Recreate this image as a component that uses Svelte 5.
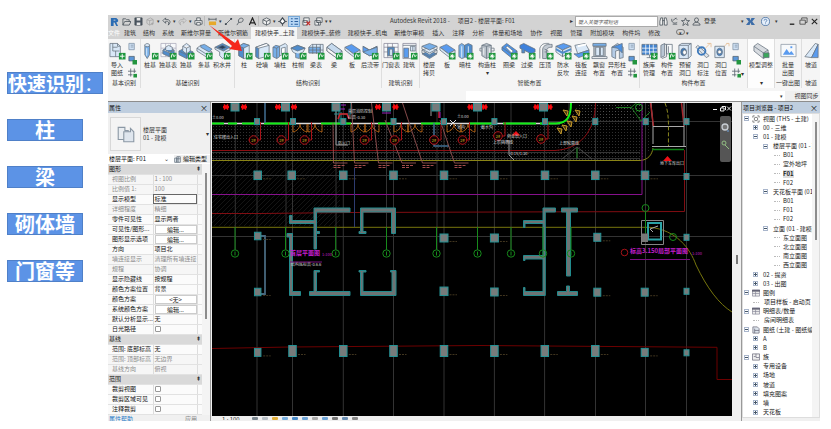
<script>
  const labels = ['柱', '梁', '砌体墙', '门窗等'];

  const quick = ['logo', 'open', 'save', 'sync', 'v', 'undo', 'v', 'redo', 'v', 'print', '|', 'dim', 'v', 'line', 'tag', 'text', '|', 'cube', 'v', 'section', 'thin', 'close', 'windows', 'v', 'v'];
  const tools = {
    logo: [['M1 1H7L9 3V5L7 6L9 10H7L5 6H4V10H1Z', '#2b6cb3', 'none'], ['M4 3H6V4H4Z', '#d3d3d3', 'none']],
    open: [['M1 9V2H4L5 3H8V5M1 9L3 5H10L8 9Z', 'none']],
    save: [['M1 1H9V9H1Z', '#4b5560'], ['M3 1H7V4H3ZM3 6H7V9H3Z', '#e8e8e8', 'none']],
    sync: [['M1 3L5 1L8 3V7L4 9L1 7ZM1 3L4 4V9M4 4L8 3M7 6V9M5.500 7.500H8.500', 'none', '#a2a2a2']],
    undo: [['M4 1L1 4L4 7V5C7 4 8 6 7 9C11 5 8 2 4 3Z', 'none']],
    redo: [['M6 1L9 4L6 7V5C3 4 2 6 3 9C-1 5 2 2 6 3Z', 'none', '#a8a8a8']],
    print: [['M3 4V1H7V4M3 8H1V4H9V8H7M3 6H7V9H3Z', '#eee']],
    dim: [['M1 1V4M9 1V4M1 2.500H9', 'none'], ['M1 5H9V9H1Z', '#e7a92b', 'none']],
    line: [['M2 8L8 2', 'none'], ['M1 7H3V9H1ZM7 1H9V3H7Z', '#3d4750', 'none']],
    tag: [['M1 9L3 6M3 6C1 1 8 0 8 3C8 6 5 6 3 6', 'none']],
    text: [['M1.500 9L5 1L8.500 9M3 6.500H7', 'none', '#222', 1.3]],
    cube: [['M1 3L5 1L9 3V7L5 9L1 7ZM1 3L5 5L9 3M5 5V9', '#eee']],
    section: [['M0 5H2M8 5H10M5 8V10', 'none'], ['M5 1L8 5L5 8L2 5Z', '#fff', '#3d4750', 1.3]],
    thin: [['M1 2H3M5 2H9M1 5H3M5 5H9M1 8H3M5 8H9', 'none', '#2a5f9e', 1.2]],
    close: [['M2 1H8V6H2ZM1 4H6V9H1Z', '#eee'], ['M5 5L9 9M9 5L5 9', 'none', '#c9302c', 1.3]],
    windows: [['M3 1H9V6H3ZM1 4H7V9H1Z', '#eee'], ['M3 6H5V9', 'none']],
    find: [['M1 9V5L2 1H4V9ZM6 9V1H8L9 5V9ZM4 4H6', '#eee']],
    sat: [['M2 2C1 6 5 8 8 6M3 8H8M3 4L7 1M6 1L8 3', 'none']],
    star: [['M5 1L6.200 4H9.500L7 6L8 9.500L5 7.500L2 9.500L3 6L.5 4H3.800Z', 'none']],
    user: [['M5 1A2.200 2.200 0 1 1 5 5.500A2.200 2.200 0 1 1 5 1M1 9C1 5 9 5 9 9Z', 'none']],
    exch: [['M0 1H4L5 4L6 1H10L7 5L10 9H6L5 6L4 9H0L3 5Z', '#3d6da8', 'none']],
    help: [['M5 .5A4.500 4.500 0 1 1 5 9.500A4.500 4.500 0 1 1 5 .5', '#e4eefa', '#35659e'], ['M3.500 4C3.500 2 6.500 2 6.500 4C6.500 5 5 5 5 6.200M5 7.200V8', 'none', '#35659e']],
    min: [['M2 8H7', 'none', '#222', 1.5]],
    max: [['M3 3V1H9V6H7M1 3.500H7V8H1Z', 'none', '#333']],
    x: [['M2 2L8 8M8 2L2 8', 'none', '#222', 1.2]]
  };

  const tabs1 = ['建筑', '结构', '系统', '斯维尔算量', '斯维尔钢筋', '建模快手_土建', '建模快手_装修', '建模快手_机电', '斯维尔审模'];
  const tabs2 = ['插入', '注释', '分析', '体量和场地', '协作', '视图', '管理', '附加模块', '构件坞', '修改'];

  const B = '#76aee8', L = '#d9e8f7', D = '#4f8ccc', W = '#f7f9fb';
  const art = {
    import: [['M1 1H9L12 4V15H1Z', L], ['M9 1V4H12M4 1V9H11M4 5H9M7 9V15', 'none']],
    pile: [['M3 3V13L5.500 17L8 13V3Z', B], ['M3 3C3 .5 8 .5 8 3C8 5 3 5 3 3', L], ['M5 6V14', 'none', '#fff']],
    footTable: [['M1 1H17V15H1ZM6 1V15M11 1V15M1 6H17M1 11H17', W, '#aab'], ['M3 8L8 5L15 8V12L10 15L3 12Z', D], ['M6 5L9 3L13 5V9L10 10L6 8ZM3 8L10 11L15 8M10 11V15', L]],
    foot: [['M1 9L7 6L16 10V13L9 17L1 13Z', D], ['M5 4L9 1L13 4V9L9 12L5 9ZM5 4L9 6L13 4M9 6V12', L], ['M1 9L9 13L16 10M9 13V17', 'none']],
    strip: [['M1 6L5 3L17 10V13L12 16L1 9Z', L], ['M5 3L9 2L17 7L14 10L5 5Z', B], ['M1 6L12 13L17 10M12 13V16', 'none']],
    well: [['M1 5L9 1L17 5L10 9Z', D], ['M4 5L9 3L13 5L9 7Z', '#273f5b'], ['M1 5L10 9L17 5V8L12 10V15L9 17L6 14V10L1 7Z', L]],
    col: [['M3 4L8 1L14 3V15L9 17L3 14Z', L], ['M3 4L8 6L14 3L8 1ZM8 6V17', B], ['M3 4L8 6V17L3 14Z', D]],
    wall: [['M2 5L13 1L16 3V14L5 17L2 15Z', L], ['M2 5L5 6V17L2 15Z', D], ['M2 5L13 1L16 3L5 6Z', '#fff']],
    wallcol: [['M1 5L4 3L8 4V15L5 17L1 15Z', B], ['M8 4L14 1L16 3V11L8 14Z', L], ['M1 5L5 6L8 4M5 6V17', 'none'], ['M10 6L14 5V11L10 12Z', '#fff']],
    cap: [['M1 6L8 3L16 6L14 10L8 13L3 10Z', L], ['M1 6L8 3L16 6L8 9Z', D], ['M6 11V16L10 17V12', B]],
    beamTable: [['M1 5L4 2H16V11H1Z', L], ['M1 5H13V11H1Z', B], ['M1 8H16M5 2V12M9 2V12M13 2V12', 'none']],
    beam: [['M1 5L6 1L17 9V14L12 17L1 9Z', L], ['M1 5L12 13V17L1 9Z', '#f5f5f5'], ['M1 5L6 1L17 9L12 13Z', '#c6daee']],
    slab: [['M1 5L8 2L17 8L10 12Z', '#5a9bef'], ['M1 5V8L10 15L17 11V8L10 12Z', L]],
    post: [['M1 4L8 8L16 4V12L8 14L1 10Z', '#5a9bef'], ['M1 4L8 8L16 4', 'none'], ['M1 10L16 5V12L8 14Z', B]],
    doorTable: [['M1 1H16V16H1ZM1 5H16M5 1V16M10 1V16M1 10H16', W, '#889'], ['M5 5H12V14H5Z', D], ['M7 7H10V14H7Z', L]],
    door: [['M2 1H16V17H2Z', W, '#889'], ['M3 6H8V16H3Z', '#5a9bef'], ['M10 4H15V9H10ZM12.500 4V9', L], ['M2 3H16', 'none']],
    copy: [['M1 12L9 9L17 12L9 17Z', D], ['M1 8L9 5L17 8L9 13Z', L], ['M1 4L9 1L17 4L9 8Z', B], ['M1 4V7L9 11L17 7V4M1 8V11L9 15L17 11V8', 'none']],
    dark: [['M2 3L5 1L8 3V16L5 17L2 15Z', B], ['M8 3L12 1L16 3V15L12 17L8 15Z', D], ['M12 4V17M5 4V16', 'none', '#fff']],
    cons: [['M3 3L8 1L13 3V14L8 17L3 14Z', '#b9c1c9'], ['M3 6H1V9H3M13 6H16V9H13M8 4V17M3 3L8 4L13 3', 'none'], ['M5 6V13M11 6V13', 'none', '#fff']],
    ring: [['M1 5L6 1L17 9V13L12 17L1 8Z', '#4b91e5'], ['M5 5L7 4L13 9L11 11Z', '#fff'], ['M1 5L12 13L17 9', 'none']],
    lintel: [['M1 3L5 1L17 7V10L13 12L1 6Z', '#3f82dc'], ['M3 7V11H6V8M11 11V16L14 15', D]],
    cope: [['M6 17V7C7 2 11 2 16 2V5C12 5 10 6 10 10V17Z', '#c3cad2'], ['M3 17V6C5 0 10 1 13 1M8 7L12 9M8 10H12', 'none']],
    water: [['M1 4L9 1L17 4L8 8Z', '#5a9bef'], ['M1 4L8 8V15L1 10ZM8 8L17 4V10L8 15Z', L], ['M1 7L8 11L17 7', 'none', D, 2]],
    raft: [['M2 3L13 1L17 8L5 12Z', L], ['M5 4L14 2', 'none', '#fff', 2], ['M5 12L17 8V12L6 16L1 12Z', '#5a9bef']],
    bay: [['M2 1H16V4H2Z', B], ['M3 4H15V15H3Z', '#b8bec5'], ['M5 5H9V14H5ZM10 5H13V14H10Z', L], ['M1 15H17V17H1Z', W]],
    odd: [['M3 5L9 1L15 5V16L11 17V8L7 9V17L3 15Z', '#b5cce6'], ['M3 5L14 1V11L9 6Z', '#4b91e5']],
    lib: [['M1 2H17V13H1Z', '#4384cf'], ['M1 6H17M1 10H17M5 2V13M9 2V13M13 2V13', 'none', '#fff'], ['M6 16H12M9 13V16', 'none']],
    parts: [['M2 3L6 1V14L2 16Z', '#b9c6d4'], ['M8 2H14V12H8Z', W], ['M6 2H8V15L3 17M10 4V11', 'none']],
    hole: [['M2 3L5 1H15V14L12 17H2Z', L], ['M2 3H12V17M12 3L15 1', 'none'], ['M7 6A3 4 0 1 1 7 14A3 4 0 1 1 7 6', '#3d79bb'], ['M8 8A2 2.500 0 1 1 8 13A2 2.500 0 1 1 8 8', '#fff']],
    mark: [['M1 5L3 3L15 14L12 16Z', '#dce3ea'], ['M7 5A4 4 0 1 1 7 13A4 4 0 1 1 7 5', 'none', '#3d79bb', 2], ['M11 6L16 1M13 1H17V5', 'none', '#e4b88c']],
    place: [['M2 4H12V16H2Z', L], ['M7 6A3 4 0 1 1 7 14A3 4 0 1 1 7 6', '#4384cf'], ['M7 8A2 2 0 1 1 7 12A2 2 0 1 1 7 8', '#fff'], ['M12 4L15 1M14 1H17V4', 'none', '#e4b88c']],
    adjust: [['M1 4L5 1L16 8V14L11 17L1 9Z', '#d7dbe0'], ['M1 4L11 11L16 8M11 11V17', 'none'], ['M11 11H17V16H11Z', '#3aa65b']],
    photo: [['M1 2H17V15H1Z', W, '#8b98a5'], ['M3 13L7 7L10 11L12 9L15 13Z', '#5a9bef', 'none'], ['M11 4H13V6H11Z', '#5a9bef', 'none']],
    ramp: [['M2 15L13 1L16 2L9 16Z', L], ['M9 16L16 2V16Z', '#5a9bef']]
  };
  const badges = {
    '+': 'M14 12V17M11.500 14.500H16.500',
    r: 'M12 16C12 11.500 14 11.500 14 13.500S16 15.500 16 13',
    o: 'M14 12V17M11.500 14.500H16.500M12.500 13L15.500 16M15.500 13L12.500 16',
    d: 'M14 11.500V16M12 14L14 16L16 14'
  };

  // [icon, first line, second line, badge]
  const groups = [
    { title: '基本识别', cls: 'g-basic', items: [['import', '导入', '图纸', '+']], small: 3 },
    { title: '基础识别', cls: 'g-foot', items: [['pile', '桩基', '', 'r'], ['footTable', '独基表', '', 'r'], ['foot', '独基', '', 'r'], ['strip', '条基', '', 'r'], ['well', '积水井', '', 'r']] },
    { title: '结构识别', cls: 'g-struct', items: [['col', '柱', '', 'r'], ['wall', '砼墙', '', 'r'], ['wallcol', '墙柱', '', 'r'], ['cap', '柱帽', '', 'r'], ['beamTable', '梁表', '', 'r'], ['beam', '梁', '', 'r'], ['slab', '板', '', 'r'], ['post', '后浇带', '', 'r']] },
    { title: '建筑识别', cls: 'g-arch', items: [['doorTable', '门窗表', '', 'r'], ['door', '建筑', '', 'r']] },
    { title: '智能布置', cls: 'g-smart', items: [['copy', '楼层', '拷贝', ''], ['slab', '板', '', 'o'], ['dark', '暗柱', '', 'o'], ['cons', '构造柱', '▾', 'o'], ['ring', '圈梁', '', 'o'], ['lintel', '过梁', '', 'o'], ['cope', '压顶', '', 'o'], ['water', '防水', '反坎', 'o'], ['raft', '筏板', '连接', 'o'], ['bay', '飘窗', '布置', ''], ['odd', '异形柱', '布置', '']], small: 3 },
    { title: '构件布置', cls: 'g-parts', items: [['lib', '族库', '管理', 'd'], ['parts', '构件', '布置', 'r'], ['hole', '预留', '洞口', ''], ['mark', '洞口', '标注', ''], ['place', '洞口', '位置', '']], small: 3 },
    { title: '▾', cls: 'g-adjust', items: [['adjust', '模型调整', '', '']] },
    { title: '一键出图', cls: 'g-batch', items: [['photo', '批量', '出图', '']] },
    { title: '坡道', cls: 'g-ramp', items: [['ramp', '坡道', '', '']] }
  ];

  // [name, value, kind]
  const props = [
    ['图形', '', 'head'], ['视图比例', '1 : 100', 'dim'], ['比例值 1:', '100', 'dim'], ['显示模型', '标准', 'box'],
    ['详细程度', '精细', 'dim'], ['零件可见性', '显示两者', ''], ['可见性/图形...', '编辑...', 'btn'], ['图形显示选项', '编辑...', 'btn'],
    ['方向', '项目北', ''], ['墙连接显示', '清理所有墙连接', 'dim'], ['规程', '协调', 'dim'], ['显示隐藏线', '按规程', ''],
    ['颜色方案位置', '背景', ''], ['颜色方案', '<无>', 'btn'], ['系统颜色方案', '编辑...', 'btn'], ['默认分析显示...', '无', ''],
    ['日光路径', '', 'check'], ['基线', '', 'head'], ['范围: 底部标高', '无', ''], ['范围: 顶部标高', '无边界', 'dim'],
    ['基线方向', '俯视', 'dim'], ['范围', '', 'head'], ['裁剪视图', '', 'check'], ['裁剪区域可见', '', 'check'], ['注释裁剪', '', 'check']
  ];

  // [depth, toggle, label, icon]
  const tree = [
    [0, '−', '视图 (THS - 土建)', 'view'], [1, '+', '00 - 三维'], [1, '−', '01 - 建模'], [2, '−', '楼层平面 (01 - 建模)'],
    [3, '', 'B01'], [3, '', '室外地坪'], [3, '', 'F01'], [3, '', 'F02'], [2, '−', '天花板平面 (01 - 建模)'],
    [3, '', 'B01'], [3, '', 'F01'], [3, '', 'F02'], [2, '−', '立面 (01 - 建模)'], [3, '', '东立面图'], [3, '', '北立面图'],
    [3, '', '南立面图'], [3, '', '西立面图'], [1, '+', '02 - 提资'], [1, '+', '03 - 出图'], [0, '−', '图例', 'leg'],
    [1, '', '项目样板 - 启动页'], [0, '−', '明细表/数量', 'leg'], [1, '', '房间明细表'], [0, '−', '图纸 (土建 - 图纸编号)', 'sheet'],
    [1, '+', 'A'], [1, '+', 'B'], [0, '−', '族', 'fam'], [1, '+', '专用设备'], [1, '+', '场地'], [1, '+', '坡道'],
    [1, '+', '填充图案'], [1, '+', '墙'], [1, '+', '天花板']
  ];

  // plan geometry
  const fullAxes = [257, 292.5, 343.3, 393.5, 444, 494.4, 544.6, 595.5, 645.5, 686.5];
  const topAxes = [235.3, 286, 336, 386.5, 437, 477.5, 511, 569];
  const cols = [
    ...[235, 285.5, 336, 386.5, 436, 477.5, 543.5].map((x) => [x, 107, 8, 8]),
    ...[257, 293, 343.3, 393.5, 444, 494.4, 545, 595.3, 645.7, 686.5].map((x) => [x, 121.600, 5, 6]),
    ...[257.7, 291.7, 343.3, 393.5, 444, 494.4, 545, 595.3, 645].map((x) => [x, 175.300, 7.5, 8.5]),
    [686.5, 176.5, 5, 6], [257.7, 236, 6.5, 7.5], [444, 238, 8, 8], [494.4, 238, 8, 8], [597.3, 237.3, 7, 8], [686.5, 237.3, 5, 6],
    [257.7, 292, 6.5, 7.5], [444, 291.3, 8, 8.5], [494.4, 292, 7.5, 8], [597.3, 292.2, 7, 8], [644.7, 292.2, 7, 8], [686.5, 291.3, 5, 6],
    [257.7, 352.4, 6.5, 8],
    ...[292.5, 343.3, 393.5, 444, 494.4, 544.8, 595.3].map((x) => [x, 351, 7.5, 11]),
    [644.7, 352.4, 7, 8], [686.5, 352.8, 5, 6]
  ];
  const walls = [
    'M314 208H350V212H316.500V249H314V223.500H289.500V215.500H292V220.500H314Z', 'M316.500 231.500H319.500V233.500H316.500Z',
    'M360.500 208H395.500V233.500H391.500V212H363V231.500H366V233.500H359V231.500H360.500Z',
    'M287 233.500H292.500V291.500H300.500V295.500H289.500V237H287Z',
    'M314 270.500H319.500V272H316.500V291.500H350V295.500H309.500V291.500H314Z',
    'M359 270.500H366V272H363V291.500H392V272H390.500V270.500H396V295.500H360.500V272H359Z',
    'M543 208H555.500V212H545.300V295.500H523.500V287.500H525V291.500H543V259H525V260.500H523.500V255.500H543V223.500H525V227.500H523.500V220.500H543Z',
    'M561.500 208H577.500V212H570.500V276H566.500V212H561.500Z', 'M566.500 286H569.500V291.500H577.500V295.500H557.500V291.500H566.500Z'
  ];
  const stars = [226, 244, 278, 294, 378, 395.5, 470.5, 484.5, 536.5, 549.5];
  const tags = [[253.5, 140], [281.5, 140], [304.5, 140], [364.5, 140], [394.5, 140], [434, 140], [462.5, 140], [498, 136], [541, 139]];
  const bubbles = [235, 285.5, 335.7, 386.5, 436.5, 477.5, 511, 543, 571];
  const doors = [293, 308, 351, 365, 394, 408, 447, 461];
  const leaders = [[333, 123, 333.5, 163], [351.500, 103, 354.500, 163], [371.500, 103, 378.500, 163], [385, 120, 402, 163], [402.500, 103, 422.500, 163], [440, 120, 454.500, 163]];
</script>

{#snippet tool(name)}
  <svg class="ti" viewBox="0 0 10 10" aria-hidden="true">
    {#each tools[name] as [d, f, s, w]}<path {d} fill={f} stroke={s ?? '#3d4750'} stroke-width={w ?? 0.8} />{/each}
  </svg>
{/snippet}

{#snippet tiny(n)}
  <svg class="tiny" viewBox="0 0 10 10" aria-hidden="true">
    {#if n === 0}
      <path d="M1 1H7V8H1ZM3 3H6M3 5H6" fill="#cfe0f3" stroke="#7a8ea3" stroke-width=".8" />
    {:else if n === 1}
      <path d="M1 1H7V6H1Z" fill="#5c97d8" stroke="#4d5a67" stroke-width=".8" /><path d="M5 5H10V10H5Z" fill="#23953f" />
    {:else}
      <path d="M3 0V9M7 0V5M0 3H9M0 7H5" fill="none" stroke="#58636e" stroke-width=".9" /><path d="M6 6H10V10H6Z" fill="#23953f" />
    {/if}
  </svg>
{/snippet}

<div class="page">
  <aside class="notes">
    <div class="note lead">快速识别<span>：</span></div>
    {#each labels as l}<div class="note">{l}</div>{/each}
  </aside>

  <main class="app">
    <header class="title">
      <div class="quick">
        {#each quick as q}
          {#if q === '|'}<i class="sep"></i>
          {:else if q === 'v'}<span class="drop">▾</span>
          {:else}<button class="tool" class:on={q === 'thin'} aria-label={q}>{@render tool(q)}</button>{/if}
        {/each}
      </div>
      <h1><span>Autodesk Revit 2018 -</span><span>项目2 - 楼层平面: F01</span></h1>
      <span class="go">▸</span>
      <input class="search" type="text" placeholder="键入关键字或短语" aria-label="搜索" />
      <div class="account">
        {#each ['find', 'sat', 'star', 'user'] as q}<button class="tool" aria-label={q}>{@render tool(q)}</button>{/each}
        <button class="login">登录</button>
      </div>
      <div class="win">
        <span class="drop">▾</span>
        <button class="tool" aria-label="exchange">{@render tool('exch')}</button>
        <button class="tool help" aria-label="help">{@render tool('help')}</button>
        <span class="drop">▾</span>
        <i class="space"></i>
        {#each ['min', 'max', 'x'] as q}<button class="tool" aria-label={q}>{@render tool(q)}</button>{/each}
      </div>
    </header>

    <nav class="tabs">
      <button class="file">文件</button>
      {#each tabs1 as t}<button class:active={t === '建模快手_土建'}>{t}</button>{/each}
      <div class="more">
        {#each tabs2 as t}<button>{t}</button>{/each}
        <button class="pill" aria-label="显示"><i>▾</i> ▾</button>
      </div>
    </nav>

    <section class="ribbon">
      {#each groups as g}
        <div class="group {g.cls}">
          <div class="items">
            {#each g.items as [icon, a, b, badge]}
              <button class="big" class:wide={icon === 'cons'}>
                <svg viewBox="0 0 18 18" aria-hidden="true">
                  {#each art[icon] as [d, f, s, w]}<path {d} fill={f} stroke={s ?? '#66727e'} stroke-width={w ?? 0.8} />{/each}
                  {#if badge}
                    <path d="M10.500 11H17.500V18H10.500Z" fill="#1d963c" />
                    <path d={badges[badge]} fill="none" stroke="#fff" />
                  {/if}
                </svg>
                <span>{a}</span>{#if b}<span>{b}</span>{/if}
              </button>
            {/each}
            {#if g.small}
              <div class="stack">
                {#each [0, 1, 2] as n}<button aria-label="{g.title} {n + 1}">{@render tiny(n)}</button>{/each}
              </div>
            {/if}
            {#if g.cls === 'g-parts'}<span class="low">▾</span>{/if}
          </div>
          <div class="gt">{g.title}</div>
        </div>
      {/each}
    </section>

    <div class="options"><div class="white"></div><span class="drop">▾</span><button>视图同步</button></div>

    <div class="body">
      <section class="props">
        <div class="ph"><b>属性</b><button aria-label="关闭属性">×</button></div>
        <button class="type">
          <span class="thumb"><svg viewBox="0 0 18 18" aria-hidden="true"><path d="M2 3H8V6H11V14H2Z" fill="#e9edf1" stroke="#8b98a5" /><path d="M7 7H13V4L16 7V16H7Z" fill="#dfe6ee" stroke="#8b98a5" /></svg></span>
          <span class="tn">楼层平面<br />01 - 建模</span><span>▾</span>
        </button>
        <div class="inst">
          <select aria-label="实例"><option>楼层平面: F01</option></select><em>⌄</em>
          <button><svg viewBox="0 0 10 10" aria-hidden="true"><path d="M1 3H4V9H1ZM4 1H9V9H4ZM4 4H9M6 1V9" fill="#eef3f8" stroke="#566573" /></svg>编辑类型</button>
        </div>
        <div class="grid">
          <table>
            <colgroup><col class="cn" /><col class="cv" /><col class="ce" /></colgroup>
            <tbody>
              {#each props as [n, v, k], i}
                {#if k === 'head'}
                  <tr class="head"><th colspan="3">{n}<i>⇞</i></th></tr>
                {:else}
                  <tr class={k}>
                    <td class="n">{#if k === 'check'}<label for="c{i}">{n}</label>{:else}{n}{/if}</td>
                    <td class="v">
                      {#if k === 'btn'}<button>{v}</button>
                      {:else if k === 'check'}<input type="checkbox" id="c{i}" />
                      {:else}{v}{/if}
                    </td>
                    <td class="e"></td>
                  </tr>
                {/if}
              {/each}
            </tbody>
          </table>
          <div class="scroll"><i></i></div>
        </div>
        <div class="pf"><a href="#help">属性帮助</a><button>应用</button></div>
      </section>

      <section class="view">
        <svg class="plan" viewBox="212 103 520 313" role="img" aria-label="楼层平面">
          <defs>
            <pattern id="dots" width="3" height="3" patternUnits="userSpaceOnUse"><path d="M0 0H1V1H0Z" fill="#303030" /></pattern>
            <pattern id="dots2" width="6" height="6" patternUnits="userSpaceOnUse"><path d="M0 0H1V1H0ZM3 3H4V4H3Z" fill="#555" /></pattern>
            <pattern id="hatch" width="5" height="5" patternUnits="userSpaceOnUse"><path d="M0 5L5 0" stroke="#1d1d1d" stroke-width=".7" /></pattern>
          </defs>
          <rect x="212" y="103" width="520" height="313" fill="#000" />
          <path d="M212 125H560L580 103H650V150L640 160H212Z" fill="url(#dots)" />
          <path d="M580 103H648L640 120H575Z" fill="url(#dots2)" />
          <rect x="212" y="161" width="128" height="65" fill="url(#hatch)" />
          <g stroke="#333" fill="none">
            {#each fullAxes as x}<path d="M{x} 103V416" />{/each}
            {#each topAxes as x}<path d="M{x} 103V250" />{/each}
            <path d="M212 152.500H640M212 158.500H640M212 175.500H732M212 236.500H732M544 121.500H732" />
          </g>
          <g fill="none">
            <path d="M212 150.500H555C580 149 595 132 595.500 103" stroke="#8c0d12" />
            <path d="M212 213.500L260 213.500L350 212.500L500 212L684.500 211.500V150" stroke="#800d12" />
            <path d="M212 348.500L290 347L480 345.500L717 347.300V379.500H732" stroke="#6d0000" />
            <path d="M212 160.500H640C648 160 652 155 653 148" stroke="#8a8416" />
            <path d="M212 227.300H650C676 230 690 248 696 265C707 288 719 304 732 312" stroke="#77760d" />
            <path d="M212 194.500H642V103" stroke="#86118c" />
            <path d="M354.500 168V227" stroke="#2e3c70" />
            <path d="M212 123.500H560" stroke="#d9d9d9" stroke-width="1.300" />
            <path d="M212 123.500H224M228 123.500H237M242 123.500H255M264 123.500H291M321 123.500H351M378 123.500H394M421 123.500H440M470 123.500H495M503 123.500H536M540 123.500H556C567 123 571 117 571 103" stroke="#11ef16" stroke-width="2" />
            <path d="M651 103L653 126V144M684 103V146M653 126.500H684M652 146.500H686" stroke="#a9a9a9" />
            <path d="M650.500 103L653.500 126M681.500 103L684 126" stroke="#a5262c" stroke-width="1.500" />
            <path d="M665 103C670 115 668 130 668.500 146" stroke="#8b8820" stroke-dasharray="4 2" />
            <path d="M652 149.500H684" stroke="#0f8216" stroke-width="1.500" />
            <path d="M616 107.500H631L640 100M631 107L641 121L650 112" stroke="#1b761e" />
            <circle cx="639" cy="107.500" r="3.500" stroke="#1fa024" />
            <path d="M562 159L577 147L592 159M577 147V159" stroke="#4a4a4a" />
            <path d="M577 148V158" stroke="#14801a" />
            <path d="M265 103V123M434 123V146H449" stroke="#416f93" stroke-width="1.500" />
            <path d="M431 103V116M336 104V145H348M509 140V155L514 160" stroke="#9a9a9a" />
            <path d="M339 103V123M334 114H351V103M341 112V123" stroke="#2a8f92" />
            <path d="M338 119L340 114H347L349 119M439 106V118" stroke="#d31d24" stroke-width="1.500" />
            <path d="M341 105H346M340 109H345M382 113H391M440 112V118" stroke="#9b22c0" />
            <path d="M450 120L456 126M456 120L450 126" stroke="#ddd" />
          </g>
          {#each doors as x}<path d="M{x} 124V132C{x + 4} 131 {x + 7} 128 {x + 7} 124M{x + 14} 124V132C{x + 10} 131 {x + 7} 128 {x + 7} 124" fill="none" stroke="#b96513" stroke-width=".9" />{/each}
          {#each [[560, 131], [565, 128], [570, 124], [575, 119], [578, 113], [566, 113]] as [x, y]}
            <path d="M{x - 3} {y - 3}L{x + 2} {y - 2}L{x + 1} {y + 3}Z" fill="#493711" stroke="#c59a2b" />
          {/each}
          {#each leaders as [a, b, c, d]}
            <path d="M{a} {b}L{c} {d}H{c + 14}" fill="none" stroke="#955454" stroke-width=".9" />
            <path d="M{c} 165.500H{c + 11}M{c} 167.500H{c + 7}" stroke="#a34c4c" stroke-dasharray="3 1" />
          {/each}
          {#each tags as [x, y]}
            <path d="M{x - 5} {y}H{x + 7}V122" fill="none" stroke="#a81218" />
            <circle cx={x} cy={y} r="4.300" fill="#100" stroke="#b0151b" />
            <text {x} y={y + 2} class="t4" fill="#cfc22a" text-anchor="middle">2#</text>
          {/each}
          {#each stars as x}<path d="M{x - 3} 107H{x + 3}M{x - 2} 104.500L{x + 2} 109.500M{x + 2} 104.500L{x - 2} 109.500" stroke="#f5090d" stroke-width="1.800" />{/each}
          <path d="M257 236H265V294H257" fill="none" stroke="#47687e" stroke-width="1.800" />
          {#each walls as d}<path {d} fill="#6d7374" stroke="#218b8d" />{/each}
          <path d="M641.500 220.500H663.500V244.500H641.500Z" fill="none" stroke="#858585" />
          <path d="M648 223H661V239.500H648Z" fill="none" stroke="#2ba3a6" stroke-width="2" />
          <path d="M641.500 233.500H648V242H641.500Z" fill="#777" />
          <path d="M650 229L658 226M650 229L653 232" stroke="#aaa" />
          {#each cols as [x, y, w, h]}
            <rect x={x - w / 2} y={y - h / 2} width={w} height={h} fill="#777b7b" stroke="#229396" />
            {#if w > 6 && y > 150}<path d="M{x + 5.500} {y + 3.500}H{x + 13}" stroke="#40351f" stroke-dasharray="2 1" />{/if}
          {/each}
          <g fill="none" stroke="#178b1c">
            {#each bubbles as x}<path d="M{x} 227V249.500M{x} 251.500V255.500" /><circle cx={x} cy="253.500" r="3.700" />{/each}
            <path d="M645.500 212V233" /><circle cx="645.500" cy="208" r="3.500" /><circle cx="673" cy="237" r="3.500" />
          </g>
          <circle cx="624.500" cy="252.500" r="3.300" fill="none" stroke="#a11217" />
          <path d="M511.500 135.500L516 131L520.500 135.500ZM663 161L667.500 156L672 161Z" fill="#ee1016" />
          <g fill="#d8d8d8" class="t4">
            <text x="214" y="139">住宅楼出入口</text><text x="212" y="119">±0.00</text><text x="348" y="113">首层消防控制</text><text x="348" y="119">标高-0.30</text>
            <text x="338" y="145">防火门</text><text x="457" y="118">±0.00</text><text x="457" y="129">室内</text><text x="481" y="129">截水沟</text><text x="507" y="138">商业出入口</text>
            <text x="493" y="144">上层挑檐线</text><text x="559" y="145">上部轮廓线</text><text x="509" y="155">-0.15/1.30</text><text x="660" y="165">地下车库出口</text>
            <text x="291" y="266">结构底标高-0.6.6</text>
          </g>
          <g fill="#c41fcd">
            <text class="t6" x="290" y="255">首层平面图</text><text class="t4" x="322" y="256">1:100</text>
            <text class="t6" x="630" y="253">标高3.150局部平面图</text><text class="t4" x="692" y="255">1:100</text>
          </g>
          <path d="M290 262H322M630 259.500H690" stroke="#7a1080" />
          <rect x="720" y="116" width="11" height="46" rx="2" fill="#555" />
          <circle cx="725" cy="127" r="3" fill="#777" stroke="#c9ced4" stroke-width="1.300" />
          <path d="M727 131H729" stroke="#6da0dc" /><path d="M722 143A2 2 0 1 1 726 143A2 2 0 1 1 722 143M725 145L729 149" fill="none" stroke="#91bd82" />
          <path d="M713 109.500H717M720.500 108H724V111H720.500ZM722 108V106.500H725.500V110M727 106.500L731 110.500M731 106.500L727 110.500" fill="none" stroke="#eee" />
        </svg>
        <div class="status">
          <span>1 : 100</span>
          {#each ['#7b8790', '#b8bfc6', '#e0ae3a', '#78aede', '#4a8bc8', '#6ea4d6', '#aaa', '#6ea4d6', '#777', '#6b8fb3', '#888'] as c}<i style="background:{c}"></i>{/each}
        </div>
      </section>

      <div class="vscroll"><i></i></div>

      <section class="browser">
        <div class="ph"><b>项目浏览器 - 项目2</b><button aria-label="关闭浏览器">×</button></div>
        <div class="treebox">
          <ul>
            {#each tree as [d, t, l, ic], i}
              <li class="d{d}" class:current={i === 6}>
                {#if t}<button aria-label="{t === '+' ? '展开' : '折叠'} {l}" class:plus={t === '+'}></button>{:else}<i class="dash"></i>{/if}
                {#if ic}
                  <svg viewBox="0 0 9 9" aria-hidden="true">
                    {#if ic === 'view'}<path d="M1 3V1H3M6 1H8V3M8 6V8H6M3 8H1V6" fill="none" stroke="#555" stroke-width=".8" /><circle cx="4.500" cy="4.500" r="2" fill="none" stroke="#555" stroke-width=".8" />
                    {:else if ic === 'leg'}<path d="M.5 1H8.500V8H.5ZM.5 5H8.500M4 3V8" fill="#eee" stroke="#889" stroke-width=".8" /><path d="M0 1H9V3H0Z" fill="#667" />
                    {:else if ic === 'sheet'}<path d="M1 1H6L8 3V8H1ZM3 3V8M3 5H8" fill="#dde4ec" stroke="#667" stroke-width=".8" />
                    {:else}<path d="M.5 1H8.500V8H.5ZM4.500 1V5H8M2 4H4" fill="#eee" stroke="#667" stroke-width=".8" />{/if}
                  </svg>
                {/if}
                <span>{l}</span>
              </li>
            {/each}
          </ul>
          <div class="scroll"><i></i></div>
        </div>
      </section>
    </div>
    <svg class="arrow" viewBox="0 0 36 30" aria-hidden="true"><path d="M1 1L27 19L30 15L34 27L21 25L24 22Z" fill="#f5281d" /></svg>
  </main>
</div>

<style>
  :global(body) { margin: 0; background: #fff; }
  .page { display: flex; font: 6px/8px "Noto Sans CJK SC", sans-serif; color: #333; padding: 15px 11px 9px 7px; }
  .page * { box-sizing: border-box; }
  button, input, select { appearance: none; border: 0; margin: 0; padding: 0; background: none; font: inherit; color: inherit; border-radius: 0; white-space: nowrap; }
  i, em { font-style: normal; }
  svg { display: block; flex: none; }

  .notes { flex: none; width: 101px; padding-top: 57px; display: flex; flex-direction: column; align-items: flex-start; gap: 25px; }
  .note { width: 76px; height: 22px; border: 1px solid #4f80c8; background: #5c93e6; color: #fff; font-size: 20px; line-height: 20px; font-weight: 700; text-align: center; white-space: nowrap; }
  .note.lead { width: 96px; text-align: left; font-size: 19px; }
  .note span { font-weight: 400; }

  .app { position: relative; flex: 1; min-width: 0; background: #f0f0f0; }
  .title { display: flex; align-items: center; height: 12px; background: #d3d3d3; }
  .quick, .account, .win { display: flex; align-items: center; flex: none; }
  .tool { width: 12px; height: 11px; display: grid; place-items: center; flex: none; }
  .account .tool { width: 11px; }
  .tool.on { background: #b6d5f3; outline: 1px solid #78a9d8; outline-offset: -1px; }
  .ti { width: 9px; height: 9px; }
  .drop { width: 4px; flex: none; text-align: center; font-size: 5px; }
  .sep { width: 2px; height: 10px; border-left: 1px solid #bbb; flex: none; }
  h1 { margin: 0; flex: 1; padding-left: 58px; font: inherit; display: flex; gap: 8px; white-space: nowrap; }
  .go { width: 5px; flex: none; }
  .search { width: 83px; height: 11px; background: #fff; border: 1px solid #aaa; padding-left: 2px; font-size: 5px; font-style: italic; }
  .search::placeholder { color: #555; opacity: 1; }
  .login { width: 16px; }
  .win { padding-left: 22px; }
  .win .help { width: 18px; }
  .space { width: 9px; }
  .win .tool:nth-last-child(-n+3) { width: 11px; }

  .tabs { display: flex; height: 12px; background: #d3d3d3; white-space: nowrap; overflow: hidden; }
  .tabs button { padding: 0 3px 0 4px; flex: none; }
  .tabs .file { color: #fff; padding: 0; width: 12px; }
  .tabs .active { background: #f5f5f5; }
  .more { display: flex; margin-left: 1px; }
  .more button { padding: 0 4px; }
  .pill { margin-left: 8px; font-size: 5px; }
  .pill i { border: 1px solid #777; border-radius: 3px; padding: 0 2px; line-height: 5px; display: inline-block; height: 6px; }

  .ribbon { display: flex; background: #f5f5f5; height: 51px; }
  .group { display: flex; flex-direction: column; flex: none; border-right: 1px solid #dedede; height: 49px; }
  .g-basic { width: 33px; }
  .g-foot { width: 94px; }
  .g-struct { width: 147px; }
  .g-arch { width: 38px; }
  .g-smart { width: 220px; }
  .g-parts { width: 108px; }
  .g-adjust, .g-batch { width: 27px; }
  .g-ramp { flex: 1; border: 0; }
  .g-adjust { background: #fdfdfd; }
  .items { display: flex; height: 40px; padding-top: 3px; }
  .g-adjust .items, .g-batch .items, .g-ramp .items { justify-content: center; }
  .big { width: 18px; display: flex; flex-direction: column; align-items: center; flex: none; }
  .big.wide { width: 26px; }
  .big svg { width: 17px; height: 18px; margin-bottom: 1px; }
  .stack { display: flex; flex-direction: column; gap: 3px; padding-left: 2px; }
  .tiny { width: 9px; height: 10px; }
  .low { align-self: flex-end; line-height: 10px; }
  .gt { text-align: center; line-height: 8px; white-space: nowrap; }

  .options { display: flex; height: 12px; align-items: center; border-bottom: 1px solid #8d8d8d; background: #f5f5f5; padding-left: 358px; }
  .white { background: #fff; flex: 1; height: 10px; }
  .options .drop { background: #fff; width: 8px; line-height: 10px; }
  .options button { width: 35px; height: 10px; padding-left: 8px; background: #f0f0f0; }

  .body { display: flex; }
  .props { width: 102px; flex: none; display: flex; flex-direction: column; background: #f0f0f0; }
  .ph { display: flex; justify-content: space-between; align-items: center; height: 11px; flex: none; padding: 0 2px 0 1px; background: #bfcedf; }
  .ph b { font-weight: 400; color: #111; }
  .ph button { font-size: 8px; color: #111; }
  .type { display: flex; align-items: center; height: 41px; padding-right: 1px; text-align: left; }
  .thumb { width: 31px; height: 34px; margin-left: 2px; display: grid; place-items: center; border: 1px solid #d8d8d8; background: #f4f4f4; }
  .thumb svg { width: 20px; height: 20px; }
  .tn { flex: 1; padding-left: 2px; }
  .inst { display: flex; height: 10px; align-items: center; background: #fff; flex: none; }
  .inst select { width: 56px; padding-left: 1px; color: #111; }
  .inst em { width: 10px; line-height: 4px; }
  .inst button { display: flex; align-items: center; gap: 2px; background: #f0f0f0; color: #111; flex: 1; }
  .inst svg { width: 7px; height: 7px; }
  .grid { display: flex; background: #f5f5f5; }
  table { border-collapse: collapse; table-layout: fixed; width: 94px; }
  .cn { width: 45px; }
  .cv { width: 44px; }
  .ce { width: 5px; }
  td, th { padding: 0; height: 10px; line-height: 8px; font-weight: 400; text-align: left; white-space: nowrap; border-bottom: 1px solid #e2e2e2; color: #111; background: #fbfbfb; }
  .n { padding-left: 4px; border-right: 1px solid #ddd; }
  .v { padding-left: 1px; border-right: 1px solid #ddd; }
  .dim td { color: #8b8b8b; background: #f6f6f6; }
  .head th { background: #d9d9d9; padding-left: 1px; }
  .head i { float: right; padding-right: 1px; }
  .box .v { outline: 1px solid #666; outline-offset: -1px; }
  .v button { display: block; width: 100%; height: 9px; line-height: 7px; text-align: center; background: #fff; border: 1px solid #ccc; }
  .v input { display: block; width: 6px; height: 6px; border: 1px solid #999; background: #fff; border-radius: 1px; }
  .scroll { width: 8px; display: flex; justify-content: center; background: #f4f4f4; flex: none; }
  .scroll i { width: 2px; height: 146px; margin-top: 9px; background: #8c8c8c; }
  .pf { display: flex; justify-content: space-between; height: 6px; overflow: hidden; padding: 0 13px 0 1px; line-height: 8px; }
  .pf a { color: #2a7cc9; }
  .pf button { color: #888; line-height: 8px; height: 8px; }

  .view { flex: 1; min-width: 0; padding: 1px 0 0 1px; border-left: 1px solid #9b9b9b; }
  .plan { width: 100%; height: auto; }
  .t4 { font-size: 4px; }
  .t6 { font-size: 6px; font-weight: 700; }
  .status { display: flex; gap: 4px; height: 4px; overflow: hidden; padding: 1px 0 0 10px; line-height: 5px; }
  .status span { width: 26px; }
  .status i { width: 6px; height: 3px; border-radius: 1px; }
  .vscroll { width: 10px; flex: none; background: #f0f0f0; border-right: 1px solid #999; }
  .vscroll i { display: block; width: 2px; height: 9px; margin: 153px auto 0; background: #777; }

  .browser { width: 78px; flex: none; display: flex; flex-direction: column; }
  .treebox { flex: 1; display: flex; background: #fff; border: 1px solid #ddd; margin-bottom: 3px; }
  ul { flex: 1; min-width: 0; margin: 0; padding: 0; list-style: none; display: flex; flex-direction: column; overflow: hidden; }
  li { flex: 1; min-height: 9px; display: flex; align-items: center; white-space: nowrap; gap: 3px; color: #222; }
  .d0 { padding-left: 1px; }
  .d1 { padding-left: 10px; }
  .d2 { padding-left: 20px; }
  .d3 { padding-left: 31px; }
  li button { width: 5px; height: 5px; border: 1px solid #a9b6cc; flex: none; background: linear-gradient(#456, #456) center / 3px 1px no-repeat #fff; }
  li .plus { background: linear-gradient(#456, #456) center / 3px 1px no-repeat, linear-gradient(#456, #456) center / 1px 3px no-repeat #fff; }
  li svg { width: 8px; height: 8px; }
  .d1 > span, .d2 > span { padding-left: 2px; }
  .dash { width: 6px; border-top: 1px dotted #bbb; flex: none; }
  .current span { background: #ddd; font-weight: 700; }
  .treebox .scroll { width: 7px; }
  .treebox .scroll i { height: 118px; margin-top: 8px; }

  .arrow { position: absolute; left: 100px; top: 9px; width: 36px; height: 30px; }
</style>
